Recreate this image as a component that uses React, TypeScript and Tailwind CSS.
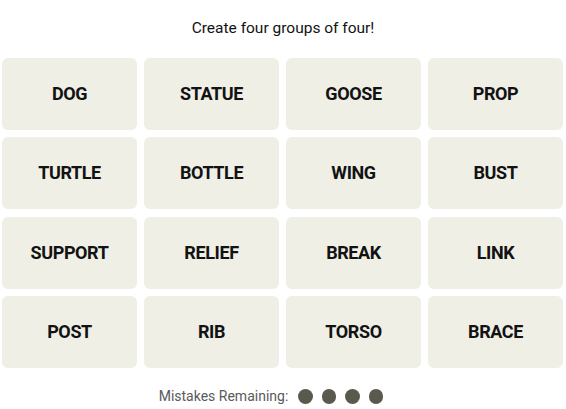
const words = [
  "DOG", "STATUE", "GOOSE", "PROP",
  "TURTLE", "BOTTLE", "WING", "BUST",
  "SUPPORT", "RELIEF", "BREAK", "LINK",
  "POST", "RIB", "TORSO", "BRACE",
];

export default function App() {
  return (
    <div className="w-[566px] h-[409px] bg-white flex flex-col items-center font-['Roboto',sans-serif] text-[#121212]">
      <p className="mt-[18px] h-[20px] text-[15.5px] leading-[20px]">Create four groups of four!</p>
      <div className="mt-[20px] ml-[-1px] grid grid-cols-4 gap-x-[7px] gap-y-[7.3px] w-[561px]">
        {words.map((w) => (
          <button
            key={w}
            className="h-[72px] pb-[1px] rounded-[6px] bg-[#efefe6] flex items-center justify-center text-[18px] font-bold tracking-[-0.4px]"
          >
            {w}
          </button>
        ))}
      </div>
      <div className="mt-[18px] mr-[24px] flex items-center gap-[10px]">
        <span className="text-[14px] text-[#5a5a5a]">Mistakes Remaining:</span>
        <div className="flex gap-[9px]">
          {[0, 1, 2, 3].map((i) => (
            <span key={i} className="w-[14.5px] h-[14.5px] rounded-full bg-[#5a594e]" />
          ))}
        </div>
      </div>
    </div>
  );
}
